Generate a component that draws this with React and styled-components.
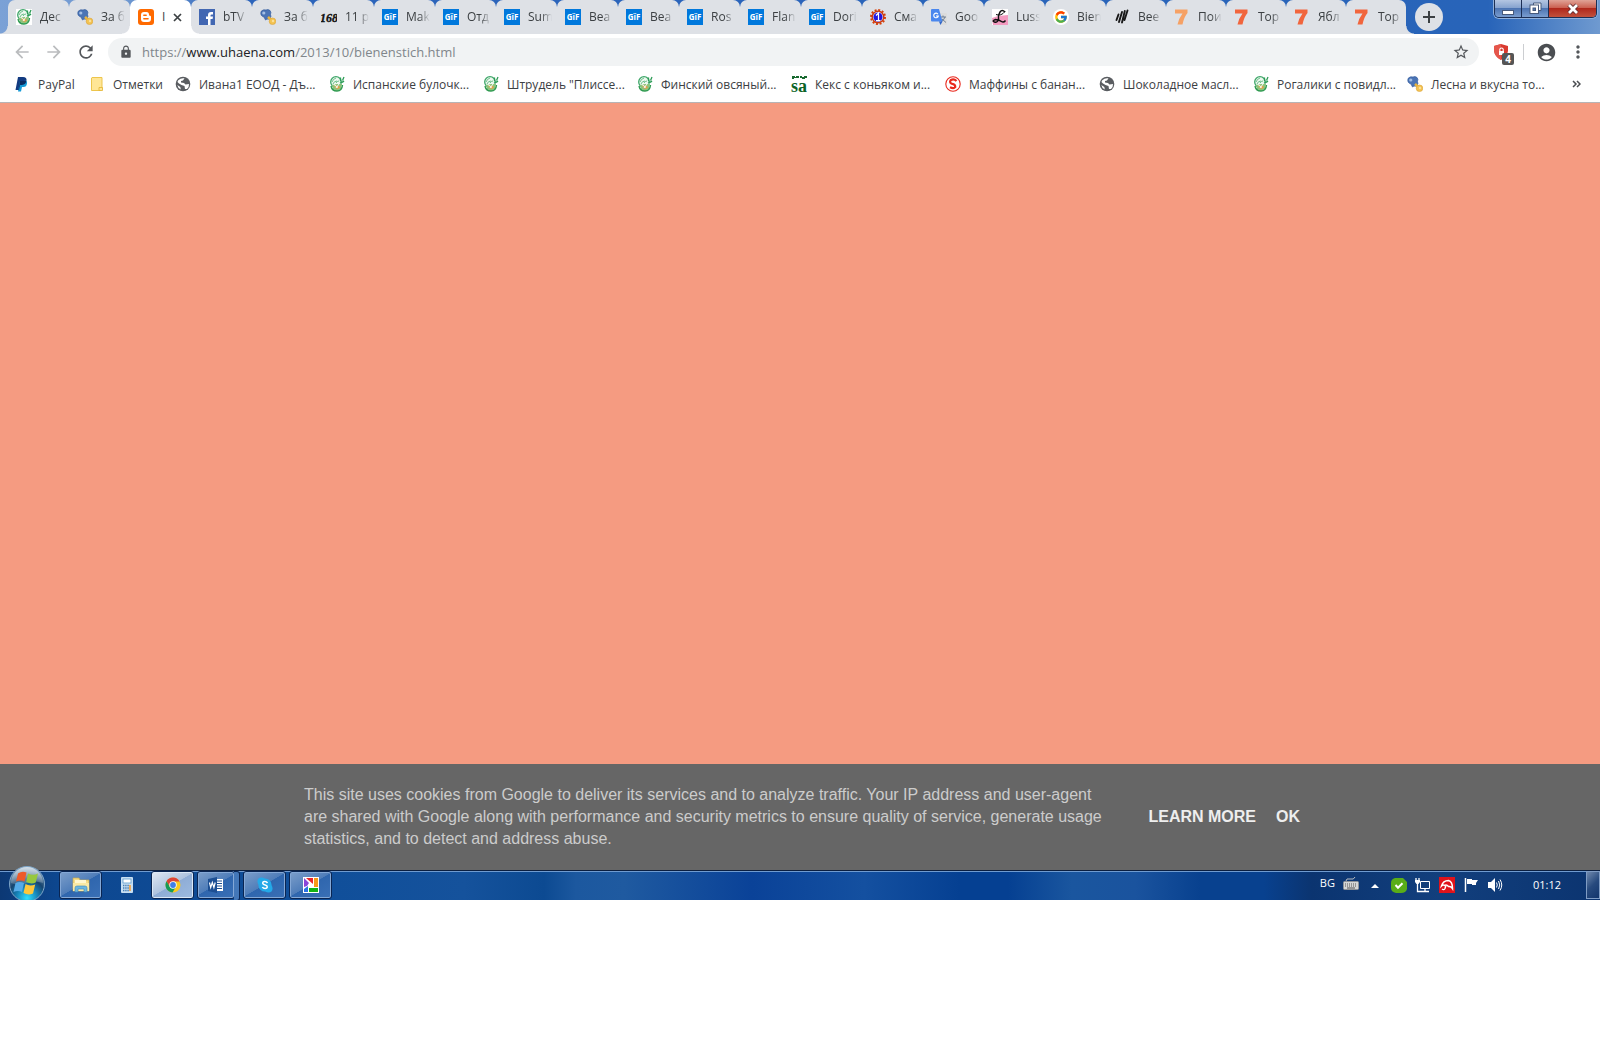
import styled, { createGlobalStyle, css } from 'styled-components'
import {
  MdAccountCircle,
  MdArrowBack,
  MdArrowForward,
  MdLock,
  MdMoreVert,
  MdRefresh,
  MdStarBorder,
} from 'react-icons/md'
import { FcGoogle } from 'react-icons/fc'

const tabs = [
  { icon: 'chef', title: 'Дес' },
  { icon: 'pacifier', title: 'За б' },
  { icon: 'blogger', title: 'I', active: true },
  { icon: 'facebook', title: 'bTV' },
  { icon: 'pacifier', title: 'За б' },
  { icon: 'script168', title: '11 p' },
  { icon: 'gif', title: 'Mak' },
  { icon: 'gif', title: 'Отд' },
  { icon: 'gif', title: 'Sum' },
  { icon: 'gif', title: 'Bea' },
  { icon: 'gif', title: 'Bea' },
  { icon: 'gif', title: 'Ros' },
  { icon: 'gif', title: 'Flan' },
  { icon: 'gif', title: 'Dori' },
  { icon: 'gear', title: 'Сма' },
  { icon: 'translate', title: 'Goo' },
  { icon: 'luss', title: 'Luss' },
  { icon: 'google', title: 'Bien' },
  { icon: 'strokes', title: 'Bee', narrow: true },
  { icon: 'sevenLight', title: 'Пои', narrow: true },
  { icon: 'seven', title: 'Тор', narrow: true },
  { icon: 'seven', title: 'Ябл', narrow: true },
  { icon: 'seven', title: 'Тор', narrow: true },
]

const bookmarks = [
  { icon: 'paypal', title: 'PayPal', width: 75 },
  { icon: 'folder', title: 'Отметки', width: 86 },
  { icon: 'globe', title: 'Ивана1 ЕООД - Дъ...' },
  { icon: 'chef', title: 'Испанские булочк...' },
  { icon: 'chef', title: 'Штрудель "Плиссе...' },
  { icon: 'chef', title: 'Финский овсяный...' },
  { icon: 'sa', title: 'Кекс с коньяком и...' },
  { icon: 'redS', title: 'Маффины с банан...' },
  { icon: 'globe', title: 'Шоколадное масл...' },
  { icon: 'chef', title: 'Рогалики с повидл...' },
  { icon: 'pacifier', title: 'Лесна и вкусна то...' },
]

const Seven = ({ color }) => (
  <path fill={color} d="M1 .5H13.500V4Q10 8 8.500 15.500H3.500Q5 9 8.500 4.500H1Z" />
)

const glyphs = {
  chef: (
    <>
      <rect width="16" height="16" fill="#fff" />
      <circle cx="7" cy="6" r="5.300" fill="#eef8ef" stroke="#3fa76a" strokeWidth="1.300" />
      <path d="M3 6q1-3 4-4M4 8q1-3 4-3M7 7q1-2 3-2" stroke="#6cbf8a" strokeWidth="1" fill="none" />
      <path d="M11.500 5V1.500M13.500 4.500L15 1M11 6q2 1 4-1" stroke="#2d9c57" strokeWidth="1.300" fill="none" />
      <path d="M3 9l5-1 5 0-1 5-4 2-4-2z" fill="#8fc37a" />
      <path d="M5 9.500l5 .5 1 2-3 1z" fill="#e0a04c" />
      <path d="M5 8.500l4 3M10 8l-3 4" stroke="#fff" strokeWidth=".9" />
      <path d="M2 10q1 5 6 5t5.500-6" stroke="#2f9a50" strokeWidth="1.400" fill="none" />
    </>
  ),
  pacifier: (
    <>
      <path
        d="M1 2.500Q3 0 6 1q2-1 4 .5 1.500 1.500.5 4 1 2-.5 4-1.500 1-3 .5L5.500 11 4 8Q0 7 1 2.500z"
        fill="#4b74b5"
        stroke="#345c9e"
        strokeWidth=".7"
      />
      <circle cx="3.800" cy="4" r="1.600" fill="#a4bfe4" />
      <path d="M8 8l4 3.500" stroke="#e8b440" strokeWidth="2.600" />
      <circle cx="12.500" cy="12.300" r="3.300" fill="#f3c352" stroke="#dba338" strokeWidth=".6" />
      <circle cx="13" cy="12" r="1.200" fill="#fbe09a" />
    </>
  ),
  blogger: (
    <>
      <rect width="16" height="16" rx="3" fill="#ff6a00" />
      <path
        d="M6 3h2.500Q11 3 11 5.700q0 1 1 1 1 0 1 1V10q0 3-3 3H6q-3 0-3-3V6q0-3 3-3z"
        fill="#fff"
      />
      <path d="M5.800 6.200h2.400M5.800 9.800h4.300" stroke="#ff6a00" strokeWidth="1.400" strokeLinecap="round" />
    </>
  ),
  facebook: (
    <>
      <rect width="16" height="16" fill="#4267b2" />
      <path
        d="M9 16V10H7V7.500h2V6q0-3 3-3h2v2.400h-1.300q-1.200 0-1.200 1.200v.9H14L13.600 10h-2.100v6z"
        fill="#fff"
      />
    </>
  ),
  script168: (
    <text
      x="8"
      y="13"
      textAnchor="middle"
      fontFamily="'Liberation Serif', serif"
      fontWeight="700"
      fontStyle="italic"
      fontSize="12"
      fill="#111"
      stroke="#111"
      strokeWidth=".3"
    >
      168
    </text>
  ),
  gif: (
    <>
      <rect width="16" height="16" fill="#0078dc" />
      <text
        x="8"
        y="11"
        textAnchor="middle"
        fontFamily="'Open Sans', sans-serif"
        fontWeight="700"
        fontSize="8"
        fill="#fff"
      >
        GïF
      </text>
    </>
  ),
  globe: (
    <>
      <circle cx="8" cy="8" r="7.300" fill="#5a5d61" />
      <path
        d="M3 4.500Q6 1.500 9.500 2.300L8 4.500l-2 .5 0 1.500 3 .5 1.500 1.500 3.500-.5q.3 3-2 5L10 13l-.5-3-3-1L4 7.500 2.500 6z"
        fill="#fff"
      />
      <path d="M10 3.500l2 0 1.500 2.500-2 .5L9.500 5z" fill="#5a5d61" />
      <path d="M2.300 9l3 2 .5 2.500Q3 12.500 2.300 9z" fill="#fff" />
    </>
  ),
  gear: (
    <>
      <circle cx="8" cy="8" r="7" fill="none" stroke="#d8400a" strokeWidth="2" strokeDasharray="2 1.665" />
      <circle cx="8" cy="8" r="5.800" fill="#fff" stroke="#c93a10" strokeWidth="1.400" />
      <circle cx="8" cy="8" r="4.600" fill="#2418e0" />
      <path d="M6 6.500L8.500 4v7.500M6 11.500h4.500" stroke="#fff" strokeWidth="1.200" fill="none" />
    </>
  ),
  translate: (
    <>
      <path d="M6 4h9q1 0 1 1v10q0 1-1 1h-5z" fill="#dcdcdc" />
      <path d="M9 8h6M12 6.500V8M14 8q-1 3-4 5M11 10l4 3.500" stroke="#6f7f94" strokeWidth="1" fill="none" />
      <path d="M1 0h7l3.500 12.500H1q-1 0-1-1V1q0-1 1-1z" fill="#4a87ee" />
      <path d="M8 12.500h3.500L9.500 16z" fill="#3065c8" />
      <path d="M7 5.200A2.300 2.300 0 1 0 7.300 7H5" stroke="#fff" strokeWidth="1.100" fill="none" />
    </>
  ),
  luss: (
    <>
      <rect width="16" height="16" fill="#fff" />
      <path d="M0 9l6-2 10-1v10H1z" fill="#f39ac0" />
      <path d="M13 3q-3-3-5 0T6.500 10q-1 4-4 3t1-2.500q4 .5 6 2t4-1" stroke="#111" strokeWidth="1.500" fill="none" />
      <path d="M4 5.500q5 2 9-3" stroke="#111" strokeWidth="1" fill="none" />
    </>
  ),
  strokes: (
    <path
      d="M4.500 5.500L2.500 11M8 3L5 13M10.800 2L8 13.500M13.500 1.500L10.500 11"
      stroke="#181818"
      strokeWidth="1.900"
      strokeLinecap="round"
      fill="none"
    />
  ),
  sevenLight: <Seven color="#f6a165" />,
  seven: <Seven color="#f1653c" />,
  paypal: (
    <>
      <path d="M4 1h5q4 0 3.500 3.500T8 9H6l-1 5H1.500z" fill="#123a80" />
      <path d="M6 5h4q3.500-1 3 2.500T9.500 11H8l-1 4.500H4z" fill="#169bd7" />
      <path d="M6 5h6.300Q12 8.500 8 9H6l-1 5h-.6z" fill="#0a2b62" />
    </>
  ),
  folder: (
    <>
      <path d="M3 1.500h10v12l-3 1H2.500V2z" fill="#ffe696" stroke="#edc54c" />
      <path d="M10 14.500v-3h3.500v3z" fill="#ffe696" stroke="#e2b431" strokeWidth=".8" />
    </>
  ),
  sa: (
    <>
      <path d="M1 0h3v1h1V0h3v2h1V0h2v1h2V0h3v2h-2v1h-3V2H3v1H1z" fill="#17692f" />
      <text
        x="8"
        y="16"
        textAnchor="middle"
        fontFamily="'Liberation Serif', serif"
        fontWeight="700"
        fontSize="18"
        fill="#0b6327"
      >
        sa
      </text>
    </>
  ),
  redS: (
    <>
      <circle cx="8" cy="8" r="7.200" fill="#fff" stroke="#e9281d" strokeWidth="1.100" />
      <path
        d="M11.500 5Q9.500 3 7 3.600T5.300 6.700q.8 1.100 2.800 1.500T10.300 11q-1.500 2.200-5.300.3"
        stroke="#e9281d"
        strokeWidth="2.200"
        fill="none"
      />
    </>
  ),
}

const Favicon = ({ name }) => {
  if (name === 'google') {
    return (
      <RoundIcon>
        <FcGoogle size={14} />
      </RoundIcon>
    )
  }
  return (
    <IconSvg viewBox="0 0 16 16" aria-hidden="true">
      {glyphs[name]}
    </IconSvg>
  )
}

const TabStrip = () => (
  <TitleBar>
    <TabList role="tablist">
      {tabs.map((tab, i) => (
        <Tab
          key={i}
          role="tab"
          aria-selected={!!tab.active}
          $active={tab.active}
          $narrow={tab.narrow}
          $divider={!tab.active && !tabs[i + 1]?.active && i < tabs.length - 1}
        >
          <Favicon name={tab.icon} />
          <TabTitle $active={tab.active}>{tab.title}</TabTitle>
          {tab.active && (
            <svg width="9" height="9" viewBox="0 0 9 9">
              <path d="M1 1l7 7M8 1L1 8" stroke="#3c4043" strokeWidth="1.700" />
            </svg>
          )}
        </Tab>
      ))}
    </TabList>
    <NewTab aria-label="New tab">
      <svg width="12" height="12" viewBox="0 0 12 12">
        <path d="M6 0v12M0 6h12" stroke="#3c4043" strokeWidth="2" />
      </svg>
    </NewTab>
    <WindowControls>
      <WindowButton aria-label="Minimize">
        <svg width="12" height="14" viewBox="0 0 12 14">
          <rect x=".5" y="8.500" width="11" height="4" fill="#fff" stroke="#475a7c" />
        </svg>
      </WindowButton>
      <WindowButton aria-label="Restore">
        <svg width="13" height="13" viewBox="0 0 13 13" fill="none">
          <path d="M4.500 1h7.500v7.500h-3v-4.500h-4.500z" fill="#fff" stroke="#475a7c" />
          <path d="M2.500 4.500h5.500v5.500h-5.500z" stroke="#475a7c" strokeWidth="4" />
          <path d="M2.500 4.500h5.500v5.500h-5.500z" stroke="#fff" strokeWidth="2" />
        </svg>
      </WindowButton>
      <WindowButton $close aria-label="Close">
        <svg width="14" height="12" viewBox="0 0 14 12">
          <path d="M3 2l8 8M11 2l-8 8" stroke="#5c2a2e" strokeWidth="4.500" />
          <path d="M3 2l8 8M11 2l-8 8" stroke="#fff" strokeWidth="2.800" />
        </svg>
      </WindowButton>
    </WindowControls>
  </TitleBar>
)

const AddressBar = () => (
  <Toolbar>
    <ToolButton aria-label="Back" $muted>
      <MdArrowBack size={20} />
    </ToolButton>
    <ToolButton aria-label="Forward" $muted>
      <MdArrowForward size={20} />
    </ToolButton>
    <ToolButton aria-label="Reload">
      <MdRefresh size={20} />
    </ToolButton>
    <Omnibox>
      <MdLock size={14} />
      <Url href="https://www.uhaena.com/2013/10/bienenstich.html">
        https://<b>www.uhaena.com</b>/2013/10/bienenstich.html
      </Url>
      <StarButton aria-label="Bookmark this page">
        <MdStarBorder size={18} />
      </StarButton>
    </Omnibox>
    <Extension aria-label="Ad blocker">
      <svg width="16" height="16" viewBox="0 0 16 16">
        <path d="M8 0l7 2v5q-1 6-7 9-6-3-7-9V2z" fill="#d93a2f" />
        <path d="M8 0v16Q2 13 1 7V2z" fill="#e5564b" />
        <path d="M6 7h5v4H6z" fill="#fff" />
        <path d="M6.800 7V5q1.700-2 3.400 0v2" fill="none" stroke="#fff" strokeWidth="1.100" />
      </svg>
      <Badge>4</Badge>
    </Extension>
    <Rule />
    <ProfileButton aria-label="Profile">
      <MdAccountCircle size={21} />
    </ProfileButton>
    <MenuButton aria-label="Menu">
      <MdMoreVert size={20} />
    </MenuButton>
  </Toolbar>
)

const TaskBar = () => (
  <Taskbar>
    <StartButton aria-label="Start">
      <svg width="38" height="38" viewBox="0 0 38 38">
        <defs>
          <radialGradient id="orb" cx=".5" cy=".9" r=".9">
            <stop offset="0" stopColor="#2fe0ff" />
            <stop offset=".35" stopColor="#1580b5" />
            <stop offset=".6" stopColor="#17446f" />
            <stop offset="1" stopColor="#8aaac4" />
          </radialGradient>
          <linearGradient id="orbShine" x2="0" y2="1">
            <stop offset="0" stopColor="#fff" stopOpacity=".65" />
            <stop offset="1" stopColor="#fff" stopOpacity=".15" />
          </linearGradient>
        </defs>
        <circle cx="19" cy="19" r="17.500" fill="url(#orb)" stroke="#7fa6c8" />
        <path d="M3 18a16 16 0 0 1 32 0q-8-3-16 0t-16 0z" fill="url(#orbShine)" />
        <path d="M10 8.500q4-3 8.500-1l-2 9q-4-2-8.500 0z" fill="#ee5a2a" />
        <path d="M20 8.500q5 2.500 10 0l-2.300 9q-4.500 2-9.500-.5z" fill="#97c83e" />
        <path d="M7.500 18q4-2 8.500 0l-2 9q-4-2-8.500 0z" fill="#55aae8" />
        <path d="M17.500 19q4 2.500 9.700.5l-2.200 9q-4.500 2.200-9.500-.5z" fill="#fdc73b" />
      </svg>
    </StartButton>
    <TaskButton aria-label="Explorer" $framed>
      <svg width="18" height="16" viewBox="0 0 18 16">
        <path d="M1 1h6l1 2h9v11H1z" fill="#f5dc86" stroke="#c9a94e" strokeWidth=".7" />
        <path d="M3 3h11v3H3z" fill="#fff7cf" />
        <path d="M1 6h16v8H1z" fill="#fae9a4" />
        <path d="M3 15v-4q0-2 2-2h8q2 0 2 2v4h-3v-3H6v3z" fill="#6cb6df" stroke="#3b88b8" strokeWidth=".6" />
      </svg>
    </TaskButton>
    <TaskButton aria-label="Calculator">
      <svg width="12" height="16" viewBox="0 0 12 16">
        <rect width="12" height="16" rx="1" fill="#c8dff2" />
        <rect x="2" y="2" width="8" height="4" fill="#fff" stroke="#5d9bcd" strokeWidth=".8" />
        <path d="M2 8.500h6M2 11h6M2 13.500h6" stroke="#487fb5" strokeWidth="1.400" strokeDasharray="1.400 .8" />
        <path d="M9 8v6" stroke="#f19b38" strokeWidth="1.600" />
      </svg>
    </TaskButton>
    <TaskButton aria-label="Chrome" $framed $current>
      <svg width="16" height="16" viewBox="0 0 16 16">
        <circle cx="8" cy="8" r="7.500" fill="#f9c920" />
        <path d="M1.500 4.200A7.500 7.500 0 0 1 14.500 4.500H8L5 10z" fill="#db4437" />
        <path d="M1.500 4.200A7.500 7.500 0 0 0 7.500 15.500l3.300-5.500H5z" fill="#169b57" />
        <circle cx="8" cy="8" r="3.700" fill="#fff" />
        <circle cx="8" cy="8" r="2.900" fill="#3f7fe8" />
      </svg>
    </TaskButton>
    <TaskButton aria-label="Word" $framed $stacked>
      <svg width="16" height="16" viewBox="0 0 16 16">
        <path d="M8 2h7v12H8z" fill="#fff" />
        <path d="M9 4h5M9 6.500h5M9 9h5M9 11.500h5" stroke="#1f4f91" />
        <path d="M0 2l9-2v16l-9-2z" fill="#1d4f93" />
        <path d="M1.500 5.500l1.200 5 1.600-5 1.600 5 1.300-5" stroke="#fff" strokeWidth="1.200" fill="none" />
      </svg>
    </TaskButton>
    <TaskButton aria-label="Skype" $framed>
      <svg width="16" height="16" viewBox="0 0 16 16">
        <circle cx="8" cy="8" r="6.600" fill="#24a9e8" />
        <circle cx="4.500" cy="4.500" r="4" fill="#24a9e8" />
        <circle cx="11.500" cy="11.500" r="4" fill="#24a9e8" />
        <path
          d="M10.500 6Q9.500 4.300 7.500 4.500T5.800 6.500q.3 1 2.400 1.400T10.300 10q-.3 1.500-2.200 1.500T5.400 10"
          stroke="#fff"
          strokeWidth="1.500"
          fill="none"
        />
      </svg>
    </TaskButton>
    <TaskButton aria-label="Pictures" $framed>
      <svg width="16" height="16" viewBox="0 0 16 16">
        <rect width="16" height="16" fill="#fff" />
        <path d="M1 1l5 5-2 3-3 1z" fill="#8b46d8" />
        <path d="M3 1h7v6z" fill="#e8242a" />
        <path d="M11 1h4v9h-4z" fill="#f79a18" />
        <path d="M6 11h9v4H6z" fill="#13b313" />
        <path d="M1 12l4-3v6H1z" fill="#2871e4" />
      </svg>
    </TaskButton>
    <Tray>
      <Language>BG</Language>
      <TrayIcon viewBox="0 0 16 16">
        <path d="M3 4q0-3 4-2t5-2" stroke="#b8bcc0" fill="none" />
        <rect x=".5" y="4.500" width="15" height="8" rx="1" fill="#d5d6d6" stroke="#8e9297" />
        <path d="M2 7h12M2 9h12" stroke="#555" strokeDasharray="1 1" />
        <path d="M4 11h8" stroke="#555" />
      </TrayIcon>
      <TrayIcon viewBox="0 0 16 16">
        <path d="M4 11l4-4 4 4z" fill="#fff" />
      </TrayIcon>
      <TrayIcon viewBox="0 0 16 16">
        <path d="M4 1h8l4 4v7q-1 4-6 4H5q-5-1-5-5V6q0-4 4-5z" fill="#59ad18" />
        <path d="M4.500 8l2.500 2.700 4.500-4.500" stroke="#fff" strokeWidth="2" fill="none" />
      </TrayIcon>
      <TrayIcon viewBox="0 0 16 16">
        <path d="M5.500 4.500h9v7h-9z" fill="#123e79" stroke="#fff" />
        <path d="M10 12v2M5 14.500h9M2.500 6v8.500H6M1 1v2M4 1v2" stroke="#fff" strokeWidth="1.300" fill="none" />
        <path d="M0 3h5v2L3.500 7h-2L0 5z" fill="#fff" />
      </TrayIcon>
      <TrayIcon viewBox="0 0 16 16">
        <rect width="16" height="16" fill="#e0131b" />
        <path
          d="M2.500 9Q4 3.500 9.500 3.500q4 1 4 8Q12 9 9.500 9.500 7.500 7 5.500 8.500 4 7.500 2.500 9z"
          fill="none"
          stroke="#fff"
          strokeWidth="1.500"
        />
        <path d="M7 8.500L6 11.500q-1 2-3 .5" stroke="#fff" strokeWidth="1.400" fill="none" />
      </TrayIcon>
      <TrayIcon viewBox="0 0 16 16">
        <path d="M2.500 1v14" stroke="#fff" strokeWidth="1.500" />
        <path d="M4 2h5v1h6l-2 3v2H9V7H4z" fill="#fff" />
      </TrayIcon>
      <TrayIcon viewBox="0 0 16 16">
        <path d="M1 5h3l4-4v14l-4-4H1z" fill="#fff" />
        <path d="M9.500 5.500q1.500 2.500 0 5M11.500 4q2.500 4 0 8M13 2.500q3.500 5.500 0 11" stroke="#fff" fill="none" />
      </TrayIcon>
    </Tray>
    <Clock>01:12</Clock>
    <ShowDesktop aria-label="Show desktop" />
  </Taskbar>
)

const App = () => {
  return (
    <>
      <GlobalStyle />
      <Screen>
        <TabStrip />
        <AddressBar />
        <BookmarkBar>
          {bookmarks.map((item) => (
            <Bookmark href="#" key={item.title} $width={item.width}>
              <Favicon name={item.icon} />
              {item.title}
            </Bookmark>
          ))}
          <MoreButton aria-label="More bookmarks">
            <svg width="9" height="8" viewBox="0 0 9 8" fill="none">
              <path d="M1 1l3 3-3 3M5 1l3 3-3 3" stroke="#4a4d51" strokeWidth="1.500" />
            </svg>
          </MoreButton>
        </BookmarkBar>
        <Page />
        <CookieBar>
          <CookieInner>
            <CookieText>
              This site uses cookies from Google to deliver its services and to analyze traffic. Your
              IP address and user-agent are shared with Google along with performance and security
              metrics to ensure quality of service, generate usage statistics, and to detect and
              address abuse.
            </CookieText>
            <CookieLinks>
              <CookieLink href="#">LEARN MORE</CookieLink>
              <CookieLink href="#">OK</CookieLink>
            </CookieLinks>
          </CookieInner>
        </CookieBar>
        <TaskBar />
      </Screen>
    </>
  )
}

const GlobalStyle = createGlobalStyle`
  * {
    box-sizing: border-box;
  }
  body {
    margin: 0;
    background-color: #fff;
    font-family: 'Segoe UI', 'Open Sans', 'Noto Sans', sans-serif;
    font-size: 12px;
    color: #3c4043;
  }
  button {
    display: flex;
    align-items: center;
    justify-content: center;
    padding: 0;
    border: none;
    background: none;
    color: inherit;
    font: inherit;
  }
  a {
    color: inherit;
    text-decoration: none;
  }
  svg {
    flex-shrink: 0;
  }
`

const Screen = styled.div`
  display: flex;
  flex-direction: column;
  min-height: calc(100vh - 160px);
  overflow: hidden;
`

const IconSvg = styled.svg`
  width: 16px;
  height: 16px;
`

const RoundIcon = styled.span`
  display: flex;
  align-items: center;
  justify-content: center;
  width: 16px;
  height: 16px;
  border-radius: 50%;
  background-color: #fff;
`

const TitleBar = styled.header`
  display: flex;
  align-items: flex-start;
  height: 34px;
  padding: 0 3px 0 8px;
  background: linear-gradient(90deg, #7ba1d6 0, #6d97d0 130px, #2c64bb 250px, #2864b9 93%, #6f9ad0 100%);
`

const TabList = styled.div`
  display: flex;
  min-width: 0;
`

const Tab = styled.button`
  && {
    position: relative;
    width: ${({ $narrow }) => ($narrow ? '60px' : '61px')};
    min-width: 0;
    justify-content: flex-start;
    gap: 8px;
    height: 34px;
    padding-left: 8px;
    border-radius: 7px 7px 0 0;
    background-color: ${({ $active }) => ($active ? '#fff' : '#dee1e6')};
    z-index: ${({ $active }) => ($active ? 1 : 0)};
  }

  &::before,
  &::after {
    content: '';
    position: absolute;
    bottom: 0;
    width: 8px;
    height: 8px;
  }
  &::before {
    left: -8px;
    background: radial-gradient(
      circle at 0 0,
      transparent 7px,
      ${({ $active }) => ($active ? '#fff' : '#dee1e6')} 8px
    );
  }
  &::after {
    right: -8px;
    background: radial-gradient(
      circle at 100% 0,
      transparent 7px,
      ${({ $active }) => ($active ? '#fff' : '#dee1e6')} 8px
    );
  }

  ${({ $divider }) =>
    $divider &&
    css`
      &::after {
        right: -1px;
        bottom: 7px;
        width: 1px;
        height: 20px;
        background: #7f8388;
        z-index: 1;
      }
    `}
`

const TabTitle = styled.span`
  flex: 0 0 ${({ $active }) => ($active ? '3px' : '24px')};
  overflow: hidden;
  text-align: left;
  white-space: nowrap;
  line-height: 16px;
  mask-image: ${({ $active }) =>
    $active ? 'none' : 'linear-gradient(90deg, #000 55%, transparent)'};
`

const NewTab = styled.button`
  && {
    width: 28px;
    height: 28px;
    margin: 3px 0 0 9px;
    border-radius: 50%;
    background-color: #dee1e6;
  }
`

const WindowControls = styled.div`
  display: flex;
  height: 18px;
  margin-left: auto;
  border: 1px solid #1c2f55;
  border-top: none;
  border-radius: 0 0 5px 5px;
  box-shadow: 0 0 0 1px #8fb0dc;
  overflow: hidden;
`

const WindowButton = styled.button`
  && {
    width: ${({ $close }) => ($close ? '47px' : '27px')};
    border-right: ${({ $close }) => ($close ? 'none' : '1px solid #1c2f55')};
    background: ${({ $close }) =>
      $close
        ? 'linear-gradient(#e0a397, #cb6152 45%, #b0281c 50%, #c2513c)'
        : 'linear-gradient(#b4c6e2, #87a3cf 45%, #4d74b2 50%, #7a9dcf)'};
  }
`

const Toolbar = styled.div`
  display: flex;
  align-items: center;
  height: 34px;
  padding: 2px 12px 0;
`

const ToolButton = styled.button`
  && {
    width: 20px;
    margin-right: 12px;
    color: ${({ $muted }) => ($muted ? '#babcbe' : '#54575b')};
  }
`

const Omnibox = styled.div`
  flex: 1;
  display: flex;
  align-items: center;
  gap: 9px;
  height: 28px;
  padding: 0 9px 0 11px;
  border-radius: 14px;
  background-color: #f1f3f4;
  color: #54575b;
`

const Url = styled.a`
  && {
    flex: 1;
    font-size: 13px;
    color: #80868b;
  }

  b {
    font-weight: 400;
    color: #202124;
  }
`

const StarButton = styled.button`
  width: 18px;
`

const Extension = styled.button`
  && {
    position: relative;
    width: 16px;
    height: 16px;
    margin-left: 14px;
  }
`

const Badge = styled.span`
  position: absolute;
  top: 9px;
  left: 9px;
  width: 12px;
  border-radius: 2px;
  background-color: #555;
  color: #fff;
  font-size: 10px;
  font-weight: 700;
  line-height: 12px;
`

const Rule = styled.span`
  width: 1px;
  height: 16px;
  margin: 0 12px 0 14px;
  background-color: #ccced1;
`

const ProfileButton = styled.button`
  && {
    width: 21px;
    color: #4b4e52;
  }
`

const MenuButton = styled.button`
  && {
    width: 20px;
    margin-left: 11px;
    color: #54575b;
  }
`

const BookmarkBar = styled.nav`
  display: flex;
  align-items: center;
  height: 35px;
  padding: 0 18px 2px 14px;
  border-bottom: 1px solid #b6b4b6;
`

const Bookmark = styled.a`
  display: flex;
  align-items: center;
  flex: 0 1 ${({ $width }) => $width || 154}px;
  gap: 8px;
  white-space: nowrap;
`

const MoreButton = styled.button`
  && {
    width: 12px;
    margin-left: auto;
  }
`

const Page = styled.main`
  flex: 1;
  background-color: #f59b81;
`

const CookieBar = styled.section`
  padding: 20px 0 20px 4px;
  background-color: #666;
  color: #ccc;
  font-family: Arial, 'Liberation Sans', sans-serif;
  font-size: 16px;
  line-height: 22px;
`

const CookieInner = styled.div`
  display: flex;
  align-items: center;
  justify-content: space-between;
  max-width: 996px;
  margin: 0 auto;
`

const CookieText = styled.p`
  max-width: 804px;
  margin: 0;
`

const CookieLinks = styled.div`
  display: flex;
  gap: 20px;
`

const CookieLink = styled.a`
  && {
    color: #eee;
    font-weight: 700;
    white-space: nowrap;
  }
`

const Taskbar = styled.footer`
  display: flex;
  align-items: center;
  height: 30px;
  padding: 0 0 1px 8px;
  border-top: 1px solid #0b1f40;
  box-shadow: inset 0 1px #6f9bd0;
  background: linear-gradient(
    90deg,
    #0c3874 0,
    #0d4790 60px,
    #104f9a 21%,
    #15529c 29%,
    #0c4a92 34%,
    #1c589f 36%,
    #1f5aa0 39%,
    #0a4298 47%,
    #1450a0 54%,
    #054092 60%,
    #054092 63%,
    #1a569f 67%,
    #1a539e 71%,
    #08418f 75%,
    #08418f 79%,
    #0b3470 82%,
    #123f7d 90%,
    #0b3470 100%
  );
  color: #fff;
`

const StartButton = styled.button`
  && {
    align-self: flex-start;
    align-items: flex-start;
    width: 38px;
    height: 28px;
    margin-right: 13px;
  }

  svg {
    margin-top: -6px;
  }
`

const TaskButton = styled.button`
  && {
    position: relative;
    width: ${({ $stacked }) => ($stacked ? '38px' : '43px')};
    height: 28px;
    margin-right: ${({ $stacked }) => ($stacked ? '8px' : '3px')};
    border-radius: 3px;
    ${({ $framed, $current }) =>
      $framed &&
      css`
        border: 1px solid #0a2552;
        box-shadow: inset 0 0 0 1px ${$current ? '#dbe8f6' : '#84a8d6'};
        background: ${$current
          ? 'linear-gradient(150deg, #e1e9f3, #aec3df 49%, #8fadd6 50%, #9dbbe0)'
          : 'linear-gradient(150deg, #7d9fca, #4f7db9 49%, #2f66ae 50%, #3a70b6)'};
      `}
  }

  ${({ $stacked }) =>
    $stacked &&
    css`
      &::after {
        content: '';
        position: absolute;
        top: -1px;
        right: -6px;
        width: 5px;
        height: 28px;
        border: 1px solid #0a2552;
        border-left: none;
        border-radius: 0 3px 3px 0;
        background-color: #4377b8;
      }
    `}
`

const Tray = styled.div`
  display: flex;
  align-items: center;
  gap: 8px;
  margin-left: auto;
`

const Language = styled.span`
  font-size: 11px;
  line-height: 16px;
  padding-bottom: 4px;
`

const TrayIcon = styled.svg`
  width: 16px;
  height: 16px;
`

const Clock = styled.time`
  margin: 0 25px 0 30px;
  font-size: 11px;
  line-height: 16px;
`

const ShowDesktop = styled.button`
  && {
    width: 14px;
    height: 28px;
    border: 1px solid #7f9cc4;
    background: linear-gradient(135deg, #7089ad, #274a7e 50%, #12356c);
  }
`

export default App
